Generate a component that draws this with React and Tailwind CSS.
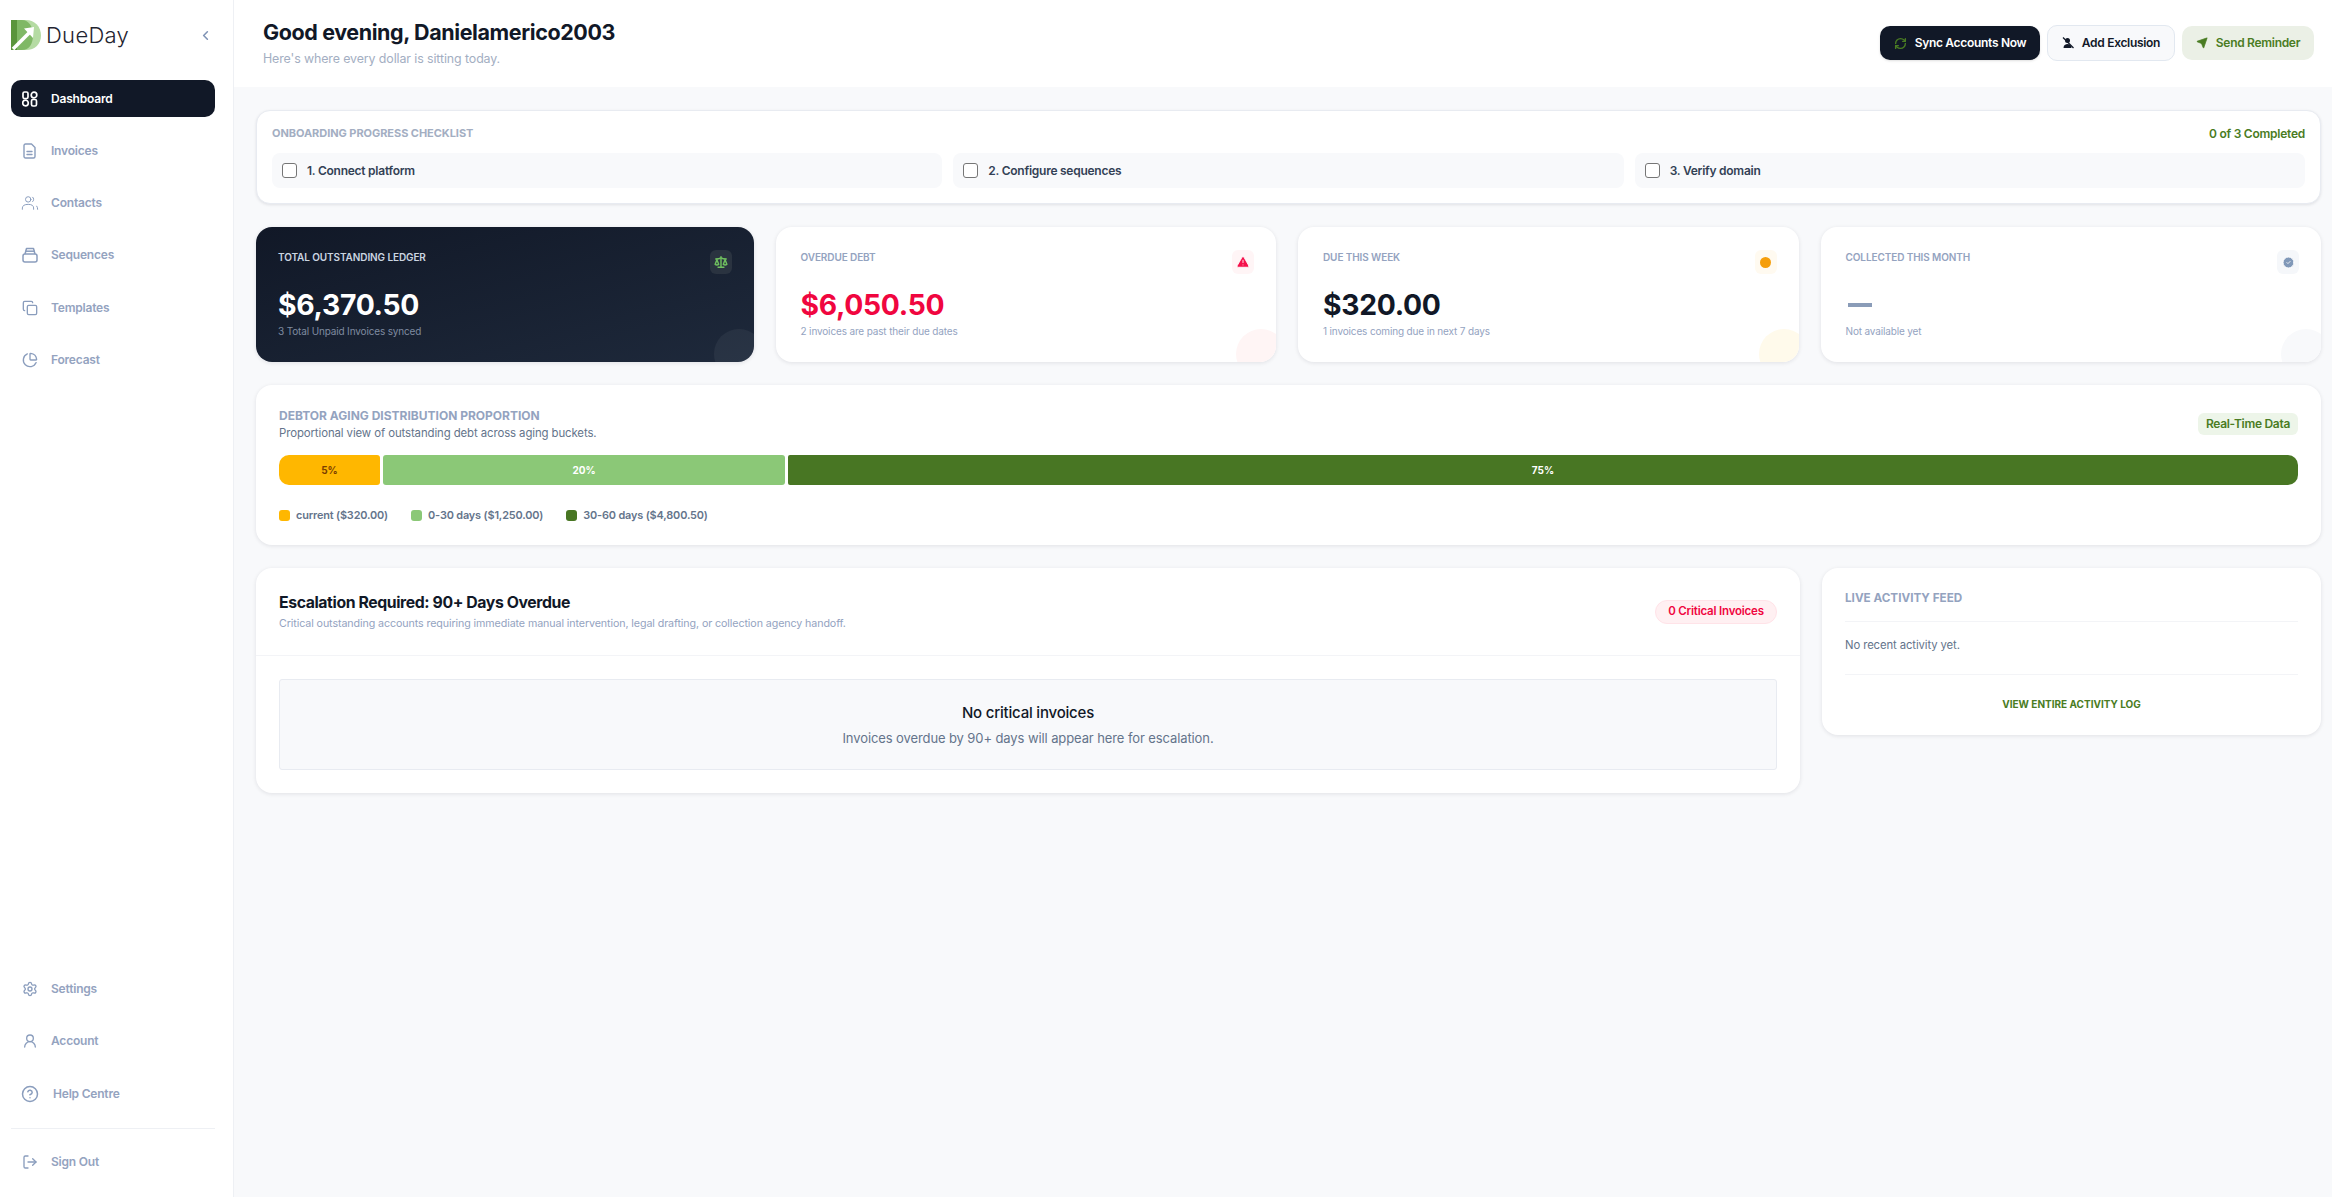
import React from "react";
import {
  Copy,
  ChartPie,
  Settings,
  UserRound,
  CircleHelp,
  LogOut,
  ChevronLeft,
  RefreshCw,
  Send,
  Scale,
  TriangleAlert,
  CircleCheck,
} from "lucide-react";

const font = { fontFamily: '"Inter", "Noto Sans", sans-serif' };

const Logo = () => (
  <svg width="31" height="31" viewBox="0 0 31 31">
    <path d="M0 0H15C24 0 30 7 30 15.500C30 24 24 30 15 30H0Z" fill="#b5dba3" />
    <path d="M0 0H11C18 0 22 7 22 15.500C22 24 18 30 11 30H0Z" fill="#7fb865" />
    <path d="M0 0H6V30H0Z" fill="#5a953c" />
    <path d="M2 29L19 12" stroke="#fff" strokeWidth="3.500" />
    <path d="M13 8.500L23 7L22 18Z" fill="#fff" />
  </svg>
);

const DashIcon = ({ className }) => (
  <svg className={className} viewBox="0 0 16 16" fill="none" stroke="currentColor" strokeWidth="1.700">
    <rect x="1" y="1" width="5" height="6.500" rx="1.500" />
    <circle cx="12" cy="4" r="2.800" />
    <circle cx="3.500" cy="12" r="2.800" />
    <rect x="9.500" y="8.500" width="5" height="6.500" rx="1.500" />
  </svg>
);

const InvoiceIcon = ({ className }) => (
  <svg className={className} viewBox="0 0 16 16" fill="none" stroke="currentColor" strokeWidth="1.400" strokeLinejoin="round" strokeLinecap="round">
    <path d="M3.500 1H9.500L13 4.500V13.500C13 14.300 12.300 15 11.500 15H3.500C2.700 15 2 14.300 2 13.500V2.500C2 1.700 2.700 1 3.500 1Z" />
    <path d="M5 8.500H10" />
    <path d="M5 11.500H10" />
  </svg>
);

const ContactsIcon = ({ className }) => (
  <svg className={className} viewBox="0 0 20 16" fill="none" stroke="currentColor" strokeWidth="1.100" strokeLinecap="round">
    <circle cx="8" cy="4" r="3" />
    <path d="M1.500 15V13.500C1.500 11 4 9.500 8 9.500C12 9.500 14 11 14 13.500V15" />
    <path d="M13 1.500C14.500 2.500 14.500 5.500 13 6.500" />
    <path d="M17.500 11.500C18.200 12.500 18.500 13.500 18.500 15" />
  </svg>
);

const SequenceIcon = ({ className }) => (
  <svg className={className} viewBox="0 0 16 16" fill="none" stroke="currentColor" strokeWidth="1.500" strokeLinejoin="round">
    <rect x="1" y="7" width="14" height="8" rx="2" />
    <path d="M3 7L4.500 1.500H11.500L13 7" />
    <path d="M3.500 4.200H12.500" />
  </svg>
);

const ExclusionIcon = () => (
  <svg width="12" height="12" viewBox="0 0 12 12" fill="#111827">
    <circle cx="5.500" cy="3.500" r="2.500" />
    <path d="M1.500 11C1.500 8 3.500 7 5.500 7C7.500 7 9.500 8 9.500 11Z" />
    <path d="M1 0.500L11.500 11" stroke="#111827" strokeWidth="1.200" />
  </svg>
);

const NavItem = ({ icon: Icon, label, active, iconClass = "w-[16px] h-[16px]", labelClass = "ml-[12px]" }) => (
  <div
    className={`flex items-center h-[37px] rounded-[10px] pl-[10px] ${
      active ? "bg-[#111827] text-white" : "text-[#94a3bf]"
    }`}
  >
    <span className={`w-[18px] flex justify-center ${active ? "text-white" : "text-[#8a9dbd]"}`}>
      <Icon className={iconClass} />
    </span>
    <span className={`text-[12px] font-semibold tracking-[-0.2px] ${labelClass}`}>{label}</span>
  </div>
);

const KpiCard = ({ dark, label, value, sub, iconBox, icon, circle, valueClass }) => (
  <div
    className={`relative overflow-hidden flex-1 h-[135px] rounded-[16px] pt-[23px] pr-[22px] shadow-[0_1px_4px_rgba(15,23,42,0.1)] ${
      dark ? "pl-[22px] bg-gradient-to-br from-[#111827] to-[#1e293b]" : "pl-[25px] bg-white"
    }`}
  >
    <div className="flex justify-between items-start">
      <span className={`text-[10px] font-semibold leading-[14px] tracking-[-0.1px] ${dark ? "text-[#cbd5e1]" : "text-[#94a3bf]"}`}>
        {label}
      </span>
      <span className={`w-[22px] h-[24px] rounded-[6px] flex items-center justify-center ${iconBox}`}>{icon}</span>
    </div>
    <div className={`mt-[11px] h-[40px] flex items-center text-[28.300px] leading-[40px] font-bold tracking-[-0.3px] ${valueClass}`}>{value}</div>
    <div className={`-mt-[1px] text-[10px] leading-[14px] tracking-[-0.15px] ${dark ? "text-[#7f8ba0]" : "text-[#94a3bf]"}`}>{sub}</div>
    <span className={`absolute -right-[10px] -bottom-[17px] w-[50px] h-[50px] rounded-full ${circle}`} />
  </div>
);

const Step = ({ label }) => (
  <div className="flex-1 h-[35px] rounded-[8px] bg-[#f8f9fb] flex items-center pl-[10px]">
    <span className="w-[15px] h-[15px] rounded-[3px] border border-[#767676] bg-white" />
    <span className="ml-[10px] text-[12px] font-semibold text-[#334155] tracking-[-0.25px]">{label}</span>
  </div>
);

const Legend = ({ color, label }) => (
  <div className="flex items-center">
    <span className={`w-[11px] h-[11px] rounded-[3px] ${color}`} />
    <span className="ml-[6px] text-[10.900px] font-semibold text-[#64748b] tracking-[-0.15px]">{label}</span>
  </div>
);

export default function App() {
  return (
    <div style={font} className="flex w-full h-screen overflow-hidden bg-[#f8f9fb]">
      {/* sidebar */}
      <aside className="w-[234px] shrink-0 h-full bg-white border-r border-[#eef0f4] flex flex-col pl-[11px] pr-[18px]">
        <div className="flex items-center h-[80px] pb-[10px]">
          <Logo />
          <span className="ml-[4px] text-[22px] font-light text-[#1f2430] tracking-[0.3px]">DueDay</span>
          <ChevronLeft className="ml-auto mr-[2px] w-[15px] h-[15px] text-[#7f93b5]" strokeWidth={2.500} />
        </div>
        <nav className="flex flex-col gap-[15.300px]">
          <NavItem icon={DashIcon} label="Dashboard" active />
          <NavItem icon={InvoiceIcon} label="Invoices" />
          <NavItem icon={ContactsIcon} label="Contacts" iconClass="w-[19px] h-[16px]" />
          <NavItem icon={SequenceIcon} label="Sequences" />
          <NavItem icon={Copy} label="Templates" />
          <NavItem icon={ChartPie} label="Forecast" />
        </nav>
        <div className="mt-auto flex flex-col gap-[15.300px]">
          <NavItem icon={Settings} label="Settings" />
          <NavItem icon={UserRound} label="Account" />
          <NavItem icon={CircleHelp} label="Help Centre" labelClass="ml-[14px]" iconClass="w-[18px] h-[18px]" />
        </div>
        <div className="mt-[16px] border-t border-[#eef0f4] pt-[14px] pb-[17px]">
          <NavItem icon={LogOut} label="Sign Out" />
        </div>
      </aside>

      <div className="flex-1 min-w-0 flex flex-col">
        {/* header */}
        <header className="h-[87px] shrink-0 bg-white flex items-center justify-between pl-[29px] pr-[18px]">
          <div className="pb-[3px]">
            <h1 className="text-[21.500px] leading-[28px] font-bold text-[#111827] tracking-[-0.4px]">
              Good evening, Danielamerico2003
            </h1>
            <p className="mt-[5px] text-[12.400px] leading-[16px] text-[#a3aec2] tracking-[-0.1px]">
              Here's where every dollar is sitting today.
            </p>
          </div>
          <div className="flex items-center gap-[7px] pb-[1px]">
            <button className="h-[34px] w-[160px] rounded-[10px] bg-[#111827] text-white text-[12px] font-semibold tracking-[-0.3px] flex items-center justify-center gap-[8px] shadow-sm">
              <RefreshCw className="w-[13px] h-[13px] text-[#4a7c23]" strokeWidth={2.500} />
              Sync Accounts Now
            </button>
            <button className="h-[36px] w-[128px] rounded-[10px] bg-[#f8f9fb] border border-[#e2e8f0] text-[#111827] text-[12px] font-semibold tracking-[-0.3px] flex items-center justify-center gap-[8px]">
              <ExclusionIcon />
              Add Exclusion
            </button>
            <button className="h-[34px] w-[132px] rounded-[10px] bg-[#ebf0e6] text-[#4a7c23] text-[12px] font-semibold tracking-[-0.3px] flex items-center justify-center gap-[8px]">
              <Send className="w-[12px] h-[12px] fill-[#4a7c23]" strokeWidth={1.500} />
              Send Reminder
            </button>
          </div>
        </header>

        {/* content */}
        <main className="flex-1 min-h-0 pl-[22px] pr-[11px] pt-[23px] flex flex-col gap-[23px]">
          <section className="h-[94px] bg-white rounded-[14px] border border-[#e8ebf1] shadow-[0_1px_3px_rgba(15,23,42,0.1)] px-[15px]">
            <div className="flex items-center justify-between h-[42px] pt-[3px]">
              <span className="text-[11px] font-bold text-[#a3aec2] tracking-[-0.05px]">ONBOARDING PROGRESS CHECKLIST</span>
              <span className="text-[12px] font-semibold text-[#4a7c23] tracking-[-0.25px]">0 of 3 Completed</span>
            </div>
            <div className="flex gap-[11px]">
              <Step label="1. Connect platform" />
              <Step label="2. Configure sequences" />
              <Step label="3. Verify domain" />
            </div>
          </section>

          <section className="flex gap-[22px]">
            <KpiCard
              dark
              label="TOTAL OUTSTANDING LEDGER"
              value="$6,370.50"
              sub="3 Total Unpaid Invoices synced"
              iconBox="bg-[#2a3340]"
              icon={<Scale className="w-[14px] h-[14px] text-[#6fbf5f]" strokeWidth={2.500} />}
              circle="bg-white/5"
              valueClass="text-white"
            />
            <KpiCard
              label="OVERDUE DEBT"
              value="$6,050.50"
              sub="2 invoices are past their due dates"
              iconBox="bg-[#fff5f6]"
              icon={<TriangleAlert className="w-[14px] h-[14px] text-white fill-[#f5114b]" strokeWidth={1.500} />}
              circle="bg-[#fff5f5]"
              valueClass="text-[#f0063f]"
            />
            <KpiCard
              label="DUE THIS WEEK"
              value="$320.00"
              sub="1 invoices coming due in next 7 days"
              iconBox="bg-[#fffaf0]"
              icon={<span className="w-[11px] h-[11px] rounded-full bg-[#f59e0b]" />}
              circle="bg-[#fffaeb]"
              valueClass="text-[#111827]"
            />
            <KpiCard
              label="COLLECTED THIS MONTH"
              value={<span className="block w-[24px] h-[4px] ml-[2px] bg-[#8a9cb8]" />}
              sub="Not available yet"
              iconBox="bg-[#f5f7fa]"
              icon={<CircleCheck className="w-[13px] h-[13px] text-white fill-[#8098b8]" strokeWidth={1.500} />}
              circle="bg-[#f8f9fb]"
              valueClass=""
            />
          </section>

          <section className="h-[160px] bg-white rounded-[16px] shadow-[0_1px_4px_rgba(15,23,42,0.1)] px-[23px] pt-[22px]">
            <div className="flex items-center justify-between">
              <div>
                <h2 className="text-[12px] leading-[18px] font-bold text-[#94a3bf] tracking-[0px]">
                  DEBTOR AGING DISTRIBUTION PROPORTION
                </h2>
                <p className="text-[11.400px] leading-[16px] text-[#64748b] tracking-[-0.1px]">
                  Proportional view of outstanding debt across aging buckets.
                </p>
              </div>
              <span className="h-[22px] px-[8px] rounded-[6px] bg-[#edf5e9] text-[#4a7c23] text-[12px] leading-[22px] font-semibold tracking-[-0.3px]">
                Real-Time Data
              </span>
            </div>
            <div className="mt-[14px] h-[30px] flex gap-[3px] text-[10px] font-bold">
              <div className="w-[101px] rounded-l-[10px] rounded-r-[3px] bg-[#ffb700] text-[#7a3e00] flex items-center justify-center">5%</div>
              <div className="w-[402px] rounded-[3px] bg-[#8bc877] text-white flex items-center justify-center">20%</div>
              <div className="flex-1 rounded-r-[10px] rounded-l-[2px] bg-[#487623] text-white flex items-center justify-center">75%</div>
            </div>
            <div className="mt-[22px] flex gap-[23px]">
              <Legend color="bg-[#ffb700]" label="current ($320.00)" />
              <Legend color="bg-[#8bc877]" label="0-30 days ($1,250.00)" />
              <Legend color="bg-[#487623]" label="30-60 days ($4,800.50)" />
            </div>
          </section>

          <section className="flex gap-[22px] items-start">
            <div className="flex-1 h-[225px] bg-white rounded-[16px] shadow-[0_1px_4px_rgba(15,23,42,0.1)]">
              <div className="h-[88px] border-b border-[#f3f4f7] pl-[23px] pr-[23px] flex items-center justify-between">
                <div>
                  <h2 className="text-[15.800px] leading-[22px] font-bold text-[#111827] tracking-[-0.4px]">
                    Escalation Required: 90+ Days Overdue
                  </h2>
                  <p className="mt-[2px] text-[10.700px] leading-[16px] text-[#94a3bf] tracking-[-0.1px]">
                    Critical outstanding accounts requiring immediate manual intervention, legal drafting, or collection agency handoff.
                  </p>
                </div>
                <span className="h-[24px] w-[122px] rounded-full bg-[#fff0f2] border border-[#ffe3e8] text-[#f0063f] text-[11.500px] font-semibold tracking-[-0.2px] flex items-center justify-center">
                  0 Critical Invoices
                </span>
              </div>
              <div className="px-[23px] pt-[23px]">
                <div className="h-[91px] rounded-[3px] bg-[#f8f9fb] border border-[#e8ebf1] flex flex-col items-center justify-center">
                  <p className="text-[15px] leading-[22px] font-medium text-[#111827] tracking-[-0.2px]">No critical invoices</p>
                  <p className="mt-[4px] text-[13px] leading-[20px] text-[#64748b] tracking-[-0.1px]">
                    Invoices overdue by 90+ days will appear here for escalation.
                  </p>
                </div>
              </div>
            </div>

            <div className="w-[499px] shrink-0 h-[167px] bg-white rounded-[16px] shadow-[0_1px_4px_rgba(15,23,42,0.1)] px-[23px]">
              <div className="h-[54px] border-b border-[#f3f4f7] flex items-center pt-[8px] text-[11.700px] font-bold text-[#94a3bf]">
                LIVE ACTIVITY FEED
              </div>
              <div className="h-[53px] border-b border-[#f3f4f7] flex items-center pb-[6px] text-[11.300px] text-[#64748b] tracking-[-0.1px]">
                No recent activity yet.
              </div>
              <div className="h-[58px] flex items-center justify-center text-[10px] font-bold text-[#4a7c23]">
                VIEW ENTIRE ACTIVITY LOG
              </div>
            </div>
          </section>
        </main>
      </div>
    </div>
  );
}
